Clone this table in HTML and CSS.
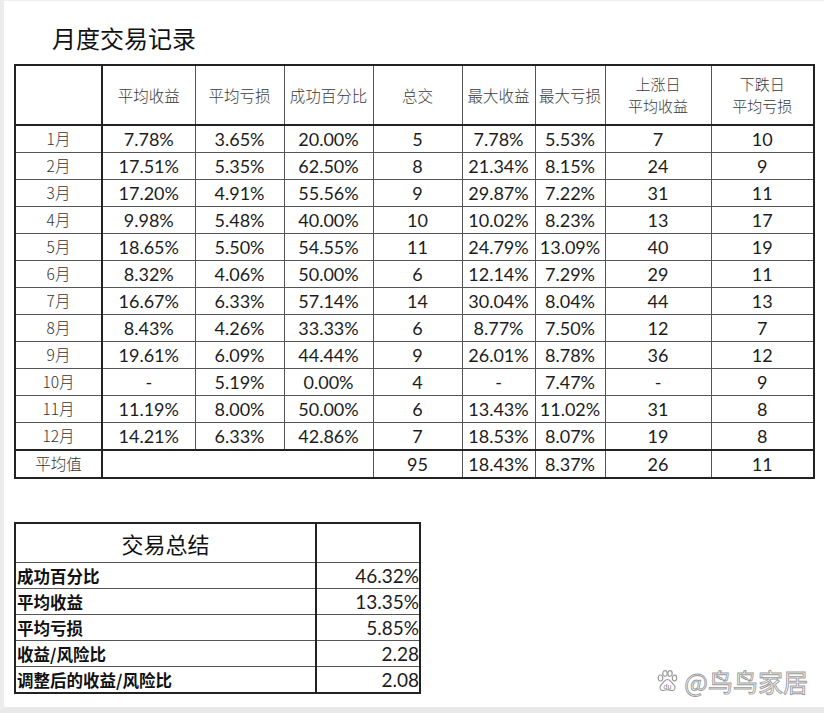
FILE: index.html
```html
<!DOCTYPE html>
<html lang="zh">
<head>
<meta charset="utf-8">
<link rel="stylesheet" href="styles.css">
</head>
<body>
<div class="page">
  <h1 class="title">月度交易记录</h1>
  <table class="main">
    <colgroup>
      <col class="c1"><col class="c2"><col class="c3"><col class="c4"><col class="c5"><col class="c6"><col class="c7"><col class="c8"><col class="c9">
    </colgroup>
    <thead>
      <tr>
        <th></th>
        <th>平均收益</th>
        <th>平均亏损</th>
        <th>成功百分比</th>
        <th>总交</th>
        <th>最大收益</th>
        <th>最大亏损</th>
        <th><span class="hl">上涨日</span><span class="hl">平均收益</span></th>
        <th><span class="hl">下跌日</span><span class="hl">平均亏损</span></th>
      </tr>
    </thead>
    <tbody>
      <tr><td class="m">1月</td><td>7.78%</td><td>3.65%</td><td>20.00%</td><td>5</td><td>7.78%</td><td>5.53%</td><td>7</td><td>10</td></tr>
      <tr><td class="m">2月</td><td>17.51%</td><td>5.35%</td><td>62.50%</td><td>8</td><td>21.34%</td><td>8.15%</td><td>24</td><td>9</td></tr>
      <tr><td class="m">3月</td><td>17.20%</td><td>4.91%</td><td>55.56%</td><td>9</td><td>29.87%</td><td>7.22%</td><td>31</td><td>11</td></tr>
      <tr><td class="m">4月</td><td>9.98%</td><td>5.48%</td><td>40.00%</td><td>10</td><td>10.02%</td><td>8.23%</td><td>13</td><td>17</td></tr>
      <tr><td class="m">5月</td><td>18.65%</td><td>5.50%</td><td>54.55%</td><td>11</td><td>24.79%</td><td>13.09%</td><td>40</td><td>19</td></tr>
      <tr><td class="m">6月</td><td>8.32%</td><td>4.06%</td><td>50.00%</td><td>6</td><td>12.14%</td><td>7.29%</td><td>29</td><td>11</td></tr>
      <tr><td class="m">7月</td><td>16.67%</td><td>6.33%</td><td>57.14%</td><td>14</td><td>30.04%</td><td>8.04%</td><td>44</td><td>13</td></tr>
      <tr><td class="m">8月</td><td>8.43%</td><td>4.26%</td><td>33.33%</td><td>6</td><td>8.77%</td><td>7.50%</td><td>12</td><td>7</td></tr>
      <tr><td class="m">9月</td><td>19.61%</td><td>6.09%</td><td>44.44%</td><td>9</td><td>26.01%</td><td>8.78%</td><td>36</td><td>12</td></tr>
      <tr><td class="m">10月</td><td>-</td><td>5.19%</td><td>0.00%</td><td>4</td><td>-</td><td>7.47%</td><td>-</td><td>9</td></tr>
      <tr><td class="m">11月</td><td>11.19%</td><td>8.00%</td><td>50.00%</td><td>6</td><td>13.43%</td><td>11.02%</td><td>31</td><td>8</td></tr>
      <tr><td class="m">12月</td><td>14.21%</td><td>6.33%</td><td>42.86%</td><td>7</td><td>18.53%</td><td>8.07%</td><td>19</td><td>8</td></tr>
      <tr class="avg"><td class="m">平均值</td><td colspan="3"></td><td>95</td><td>18.43%</td><td>8.37%</td><td>26</td><td>11</td></tr>
    </tbody>
  </table>

  <table class="summary">
    <colgroup><col class="s1"><col class="s2"></colgroup>
    <thead>
      <tr><th>交易总结</th><th></th></tr>
    </thead>
    <tbody>
      <tr><td class="lbl">成功百分比</td><td class="val">46.32%</td></tr>
      <tr><td class="lbl">平均收益</td><td class="val">13.35%</td></tr>
      <tr><td class="lbl">平均亏损</td><td class="val">5.85%</td></tr>
      <tr><td class="lbl">收益/风险比</td><td class="val">2.28</td></tr>
      <tr><td class="lbl">调整后的收益/风险比</td><td class="val">2.08</td></tr>
    </tbody>
  </table>

  <div class="watermark">
    <svg class="paw" width="24" height="24" viewBox="0 0 24 24">
      <g fill="#fff" stroke="#9a9a9a" stroke-width="1.2">
        <ellipse cx="5.5" cy="9" rx="2.3" ry="3"/>
        <ellipse cx="10" cy="4.5" rx="2.2" ry="2.8"/>
        <ellipse cx="15" cy="4.5" rx="2.2" ry="2.8"/>
        <ellipse cx="19.5" cy="9" rx="2.2" ry="2.8"/>
        <path d="M12.5 10.5c-3 0-4 3.5-6.5 5.5c-2 1.8-1 6 2.5 5.5c2-.3 2.8-.8 4-.8s2.2.5 4 .8c3.5.5 4.5-3.7 2.5-5.5c-2.5-2-3.5-5.5-6.5-5.5z"/>
      </g>
      <text x="12.5" y="19.5" text-anchor="middle" class="du">du</text>
    </svg>
    <span class="wm-text">@鸟鸟家居</span>
  </div>
</div>
</body>
</html>
```

FILE: styles.css
```css
html, body {
  margin: 0;
  padding: 0;
  background: #fff;
}

.page {
  position: relative;
  width: 820px;
  height: 706px;
  border-left: 4px solid #ececec;
  border-top: 1px solid #eeeeee;
  border-bottom: 6px solid #e9e9e9;
  background: #fff;
  font-family: "Noto Sans CJK SC", sans-serif;
  color: #222;
}

.title {
  margin: 0;
  padding: 19px 0 0 48px;
  height: 44px;
  font-size: 24px;
  font-weight: 400;
  line-height: 36px;
  color: #111;
  font-family: "Noto Sans CJK SC", sans-serif;
}

.main {
  margin-left: 10px;
  border-collapse: collapse;
  table-layout: fixed;
  width: 799px;
  border: 2px solid #222;
}

.c1 { width: 87px; }
.c2 { width: 93px; }
.c3 { width: 89px; }
.c4 { width: 89px; }
.c5 { width: 89px; }
.c6 { width: 73px; }
.c7 { width: 70px; }
.c8 { width: 106px; }
.c9 { width: 103px; }

.main th,
.main td {
  border: 1px solid #555;
  padding: 0;
  text-align: center;
  white-space: nowrap;
  overflow: hidden;
}

.main th {
  height: 58px;
  font-size: 15.5px;
  font-weight: 300;
  line-height: 20px;
  color: #3a3a3a;
  border-bottom: 2px solid #222;
  font-family: "Noto Sans CJK SC", sans-serif;
}

.main th .hl {
  display: block;
  font-size: 15px;
  line-height: 22px;
}

.main td {
  height: 26px;
  font-family: Lato, "Noto Sans CJK SC", sans-serif;
  font-size: 18px;
  line-height: 22px;
  color: #1c1c1c;
}

.main td.m {
  font-family: "Noto Sans CJK SC", sans-serif;
  font-size: 15.5px;
  font-weight: 300;
  line-height: 20px;
  color: #333;
  padding-bottom: 2px;
  height: 24px;
}

.main tr.avg td {
  border-top: 2px solid #222;
}

.main th:first-child,
.main td:first-child {
  border-right: 2px solid #222;
}

.summary {
  margin: 43px 0 0 10px;
  border-collapse: collapse;
  table-layout: fixed;
  width: 405px;
  border: 2px solid #222;
}

.s1 { width: 301px; }
.s2 { width: 104px; }

.summary th,
.summary td {
  border: 1px solid #555;
  padding: 0;
  white-space: nowrap;
  overflow: hidden;
}

.summary th {
  height: 38px;
  font-size: 22px;
  font-weight: 400;
  line-height: 28px;
  color: #111;
  text-align: center;
  font-family: "Noto Sans CJK SC", sans-serif;
}

.summary th:first-child,
.summary td:first-child {
  border-right: 2px solid #222;
}

.summary td {
  height: 25px;
  line-height: 22px;
}

.summary .lbl {
  font-family: "Noto Sans CJK SC", sans-serif;
  font-weight: 700;
  font-size: 16.5px;
  color: #111;
  text-align: left;
  padding-left: 1px;
}

.summary .val {
  font-family: Lato, sans-serif;
  font-size: 19px;
  color: #1c1c1c;
  text-align: right;
  padding-right: 0;
}

.watermark {
  position: absolute;
  right: 16px;
  bottom: 12px;
  display: flex;
  align-items: center;
  gap: 5px;
}

.paw .du {
  font-family: "Liberation Sans", sans-serif;
  font-size: 7px;
  fill: #888;
}

.wm-text {
  font-family: "Noto Sans CJK SC", sans-serif;
  font-size: 25px;
  line-height: 28px;
  color: #fff;
  -webkit-text-stroke: 0.9px #9a9a9a;
}
```
